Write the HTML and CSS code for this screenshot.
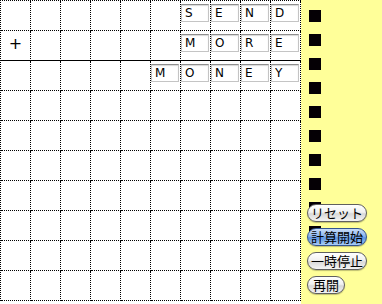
FILE: index.html
```html
<!DOCTYPE html>
<html lang="ja">
<head>
  <meta charset="UTF-8">
  <title>覆面算</title>
  <link rel="stylesheet" href="styles.css">
</head>
<body>
  <div class="board" id="board"></div>

  <div class="side">
    <div class="marks" id="marks"></div>
    <div class="controls">
      <button class="aqua">リセット</button>
      <button class="aqua primary">計算開始</button>
      <button class="aqua">一時停止</button>
      <button class="aqua">再開</button>
    </div>
  </div>

  <script>
    const size = 10;
    const words = { 0: '    SEND', 1: '    MORE', 2: '   MONEY' };
    const board = document.getElementById('board');

    for (let row = 0; row < size; row++) {
      const word = words[row] ? words[row].padStart(size, ' ') : '';
      for (let col = 0; col < size; col++) {
        const cell = document.createElement('div');
        cell.className = 'cell';
        if (row === 1) cell.classList.add('sum-line');
        if (row === 1 && col === 0) {
          cell.classList.add('op');
          cell.textContent = '+';
        }
        const ch = word[col];
        if (ch && ch !== ' ') {
          const input = document.createElement('input');
          input.type = 'text';
          input.className = 'digit';
          input.value = ch;
          cell.appendChild(input);
        }
        board.appendChild(cell);
      }
    }

    const marks = document.getElementById('marks');
    for (let i = 0; i < 10; i++) {
      const m = document.createElement('div');
      m.className = 'mark';
      marks.appendChild(m);
    }
  </script>
</body>
</html>
```

FILE: styles.css
```css
body { margin: 0; display: flex; align-items: flex-start; background: #fff; font-family: "DejaVu Sans", sans-serif; }

.board {
  display: grid; grid-template-columns: repeat(10, 30px); grid-auto-rows: 30px;
  border-top: 1px dotted #000; border-left: 1px dotted #000;
}
.cell {
  box-sizing: border-box; width: 30px; height: 30px;
  border-right: 1px dotted #000; border-bottom: 1px dotted #000;
}
.cell.sum-line { border-bottom: 1px solid #000; }
.cell.op {
  display: flex; justify-content: center; align-items: center;
  font-size: 16px; line-height: 1; padding-bottom: 4px; color: #000;
}

.digit {
  box-sizing: border-box; display: block; width: 28px; height: 18px; margin: 3px 0 0 0;
  padding: 0 0 0 3px; font-family: "DejaVu Sans", sans-serif; font-size: 12px; color: #000;
  border: 1px solid #c4c4c4; border-top-color: #8e8e8e;
  box-shadow: inset 0 1px 1px #d8d8d8; background: #fff; outline: none;
}

.side { position: relative; width: 81px; height: 304px; background: #ffff99; }
.marks { display: flex; flex-direction: column; gap: 12px; padding: 10px 0 0 8px; }
.mark { width: 12px; height: 12px; background: #050005; }

.controls {
  position: absolute; left: 6px; top: 204px;
  display: flex; flex-direction: column; align-items: flex-start; gap: 6px;
}
.aqua {
  box-sizing: border-box; height: 18px; min-width: 38px; padding: 0 3px; margin: 0;
  font-family: "Noto Sans CJK JP", sans-serif; font-size: 13px; line-height: 16px; color: #000;
  border: 1px solid #5f5f5f; border-radius: 9px;
  background: linear-gradient(#ffffff 0%, #f1f1f1 45%, #d8d8d8 55%, #f4f4f4 100%);
  box-shadow: 0 1px 1px rgba(0,0,0,0.25);
}
.aqua.primary {
  border-color: #34558f;
  background: linear-gradient(#c9ddf8 0%, #8ab4ee 45%, #5d93e0 55%, #a9cdf8 100%);
}
```
